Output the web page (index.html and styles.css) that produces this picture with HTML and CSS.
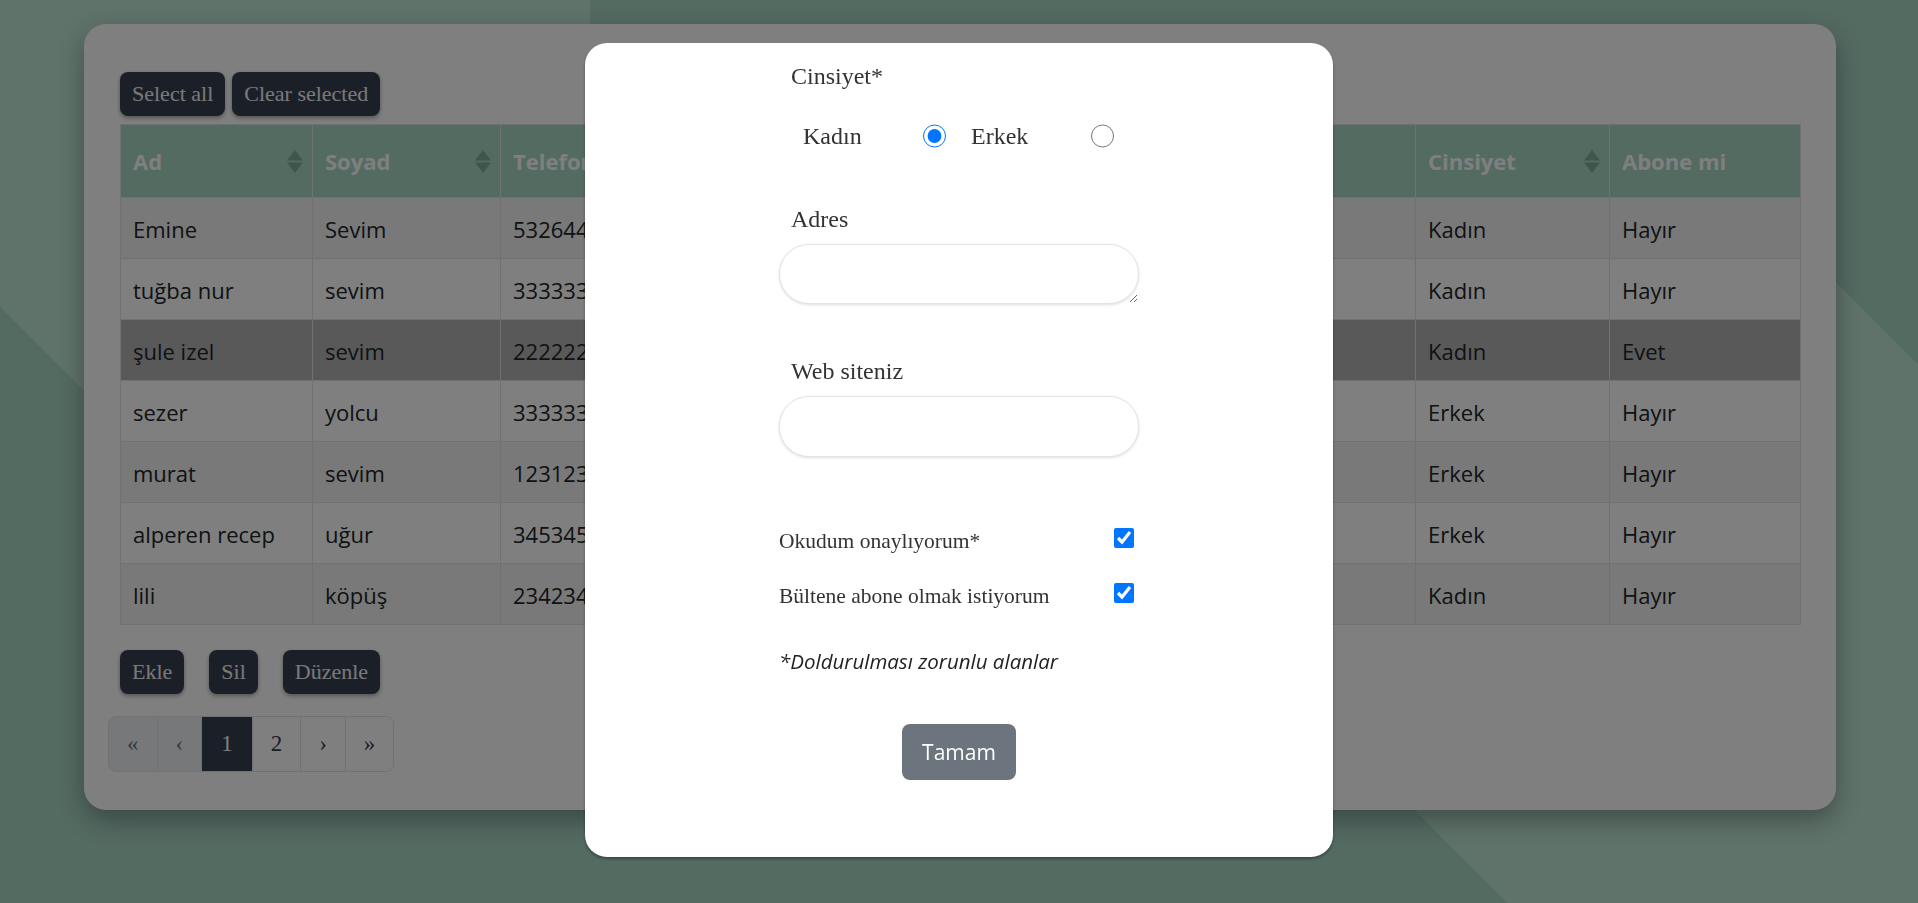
FILE: index.html
```html
<!DOCTYPE html>
<html lang="tr">
<head>
<meta charset="utf-8">
<title>Kişiler</title>
<link rel="stylesheet" href="styles.css">
</head>
<body>
<div class="page">
  <main class="card">
    <div class="toolbar">
      <button class="btn">Select all</button>
      <button class="btn">Clear selected</button>
    </div>
    <table class="grid">
      <colgroup>
        <col class="c-ad"><col class="c-soyad"><col class="c-tel"><col class="c-mail"><col class="c-adres"><col class="c-web"><col class="c-cins"><col class="c-abone">
      </colgroup>
      <thead>
        <tr>
          <th><div class="th-in"><span>Ad</span><svg class="sort" viewBox="0 0 16 23"><polygon points="0,10.5 8,0 16,10.5"/><polygon points="0,12.5 16,12.5 8,23"/></svg></div></th>
          <th><div class="th-in"><span>Soyad</span><svg class="sort" viewBox="0 0 16 23"><polygon points="0,10.5 8,0 16,10.5"/><polygon points="0,12.5 16,12.5 8,23"/></svg></div></th>
          <th><div class="th-in"><span>Telefon</span><svg class="sort" viewBox="0 0 16 23"><polygon points="0,10.5 8,0 16,10.5"/><polygon points="0,12.5 16,12.5 8,23"/></svg></div></th>
          <th><div class="th-in"><span>E-posta</span></div></th>
          <th><div class="th-in"><span>Adres</span></div></th>
          <th><div class="th-in"><span></span></div></th>
          <th><div class="th-in"><span>Cinsiyet</span><svg class="sort" viewBox="0 0 16 23"><polygon points="0,10.5 8,0 16,10.5"/><polygon points="0,12.5 16,12.5 8,23"/></svg></div></th>
          <th><div class="th-in"><span>Abone mi</span></div></th>
        </tr>
      </thead>
      <tbody>
        <tr><td>Emine</td><td>Sevim</td><td>5326441122</td><td>emine@mail.com</td><td>İstanbul</td><td></td><td>Kadın</td><td>Hayır</td></tr>
        <tr><td>tuğba nur</td><td>sevim</td><td>3333333333</td><td>tugba@mail.com</td><td>Ankara</td><td></td><td>Kadın</td><td>Hayır</td></tr>
        <tr class="selected"><td>şule izel</td><td>sevim</td><td>2222222222</td><td>sule@mail.com</td><td>İzmir</td><td></td><td>Kadın</td><td>Evet</td></tr>
        <tr><td>sezer</td><td>yolcu</td><td>3333333333</td><td>sezer@mail.com</td><td>Bursa</td><td></td><td>Erkek</td><td>Hayır</td></tr>
        <tr><td>murat</td><td>sevim</td><td>1231231231</td><td>murat@mail.com</td><td>Antalya</td><td></td><td>Erkek</td><td>Hayır</td></tr>
        <tr><td>alperen recep</td><td>uğur</td><td>3453453453</td><td>alperen@mail.com</td><td>Konya</td><td></td><td>Erkek</td><td>Hayır</td></tr>
        <tr><td>lili</td><td>köpüş</td><td>2342342342</td><td>lili@mail.com</td><td>Adana</td><td></td><td>Kadın</td><td>Hayır</td></tr>
      </tbody>
    </table>
    <div class="actions">
      <button class="btn">Ekle</button>
      <button class="btn">Sil</button>
      <button class="btn">Düzenle</button>
    </div>
    <nav class="pager">
      <span class="pg disabled">«</span>
      <span class="pg disabled">‹</span>
      <span class="pg active">1</span>
      <span class="pg">2</span>
      <span class="pg">›</span>
      <span class="pg">»</span>
    </nav>
  </main>
</div>

<div class="backdrop">
  <div class="modal">
    <form class="form">
      <div class="label">Cinsiyet*</div>
      <div class="radios">
        <label class="radio-label" for="r1">Kadın</label>
        <input type="radio" id="r1" name="cins" checked>
        <label class="radio-label" for="r2">Erkek</label>
        <input type="radio" id="r2" name="cins">
      </div>
      <div class="label label-adres">Adres</div>
      <textarea class="field area"></textarea>
      <div class="label label-web">Web siteniz</div>
      <input class="field line" type="text">
      <div class="check-row first">
        <span class="check-text">Okudum onaylıyorum*</span>
        <input type="checkbox" checked>
      </div>
      <div class="check-row">
        <span class="check-text">Bültene abone olmak istiyorum</span>
        <input type="checkbox" checked>
      </div>
      <p class="note">*Doldurulması zorunlu alanlar</p>
      <div class="submit-row">
        <button type="button" class="ok">Tamam</button>
      </div>
    </form>
  </div>
</div>
</body>
</html>
```

FILE: styles.css
```css
* { box-sizing: border-box; }

html, body {
  margin: 0;
  height: 100%;
}

body {
  font-family: "Open Sans", "Noto Sans", sans-serif;
  overflow: hidden;
}

.page {
  height: 100vh;
  padding-top: 24px;
  background:
    linear-gradient(45deg, transparent 137px, #bee6d4 137px) 0 0 / 590px 500px no-repeat,
    linear-gradient(45deg, transparent 1066px, #bee6d4 1066px, #bee6d4 1737px, transparent 1737px) 0 100% / 100% 853px no-repeat,
    #a8d6c4;
}

.card {
  width: 1752px;
  margin-left: 84px;
  background: #fff;
  border-radius: 22px;
  padding: 48px 36px 38px;
  box-shadow: 0 10px 26px rgba(0, 0, 0, 0.32);
}

.btn {
  height: 44px;
  padding: 0 12px;
  border: none;
  border-radius: 8px;
  background: #374151;
  color: #f2f2f2;
  font-family: "Liberation Serif", "Times New Roman", serif;
  font-size: 22px;
  line-height: 44px;
  box-shadow: 0 2px 4px rgba(0, 0, 0, 0.35);
  cursor: pointer;
}

.toolbar {
  display: flex;
  gap: 7px;
  margin-bottom: 8px;
}

.grid {
  width: 100%;
  table-layout: fixed;
  border-collapse: collapse;
  font-size: 22px;
  color: #212529;
}

.c-ad { width: 192px; }
.c-soyad { width: 188px; }
.c-tel { width: 220px; }
.c-mail { width: 240px; }
.c-adres { width: 220px; }
.c-web { width: 235px; }
.c-cins { width: 194px; }
.c-abone { width: 191px; }

.grid th,
.grid td {
  border: 1px solid #dee2e6;
  text-align: left;
  white-space: nowrap;
  overflow: hidden;
}

.grid thead tr { height: 73px; }
.grid tbody tr { height: 61px; }

.grid th {
  background: #a8d6c4;
  color: #fff;
  font-weight: 700;
  padding: 0 9px 0 12px;
}

.th-in {
  display: flex;
  align-items: center;
  justify-content: space-between;
}

.sort {
  width: 16px;
  height: 23px;
  fill: #7cac98;
  flex: none;
}

.grid td {
  padding: 2px 12px 0;
  background: #fff;
}

.grid tbody tr:nth-child(odd) td {
  background: #f2f2f2;
}

.grid tbody tr.selected td {
  background: #b3b3b3;
}

.actions {
  display: flex;
  gap: 25px;
  margin-top: 25px;
}

.pager {
  display: inline-flex;
  margin: 22px 0 0 -12px;
  border: 1px solid #dee2e6;
  border-radius: 8px;
  overflow: hidden;
  height: 56px;
  font-family: "Liberation Serif", "Times New Roman", serif;
  font-size: 23px;
}

.pg {
  display: flex;
  align-items: center;
  padding: 0 18px;
  background: #fff;
  color: #374151;
}

.pg + .pg { border-left: 1px solid #dee2e6; }

.pg.disabled {
  background: #eef0f3;
  color: #6c757d;
}

.pg.active {
  background: #374151;
  color: #fff;
  padding: 0 19px;
}

/* modal */
.backdrop {
  position: fixed;
  inset: 0;
  background: rgba(0, 0, 0, 0.5);
  display: flex;
  align-items: flex-start;
  justify-content: center;
  padding-top: 43px;
}

.modal {
  width: 748px;
  height: 814px;
  background: #fff;
  border-radius: 22px;
  padding-top: 18px;
  display: flex;
  justify-content: center;
  box-shadow: 0 2px 3px rgba(0, 0, 0, 0.35);
}

.form {
  width: 360px;
  color: #333;
  font-family: "Liberation Serif", "Times New Roman", serif;
}

.label {
  font-size: 24px;
  line-height: 30px;
  padding-left: 12px;
}

.radios {
  display: flex;
  align-items: center;
  height: 40px;
  margin-top: 25px;
  padding-left: 24px;
  font-size: 24px;
}

.radio-label { width: 120px; }

.radios input {
  width: 24px;
  height: 24px;
  margin: 0 24.6px 0 0;
}

.label-adres { margin-top: 47.6px; }
.label-web { margin-top: 52.5px; }

.field {
  display: block;
  width: 360px;
  height: 60px;
  border: 1px solid #e4e4e4;
  border-radius: 30px;
  box-shadow: 0 1px 3px rgba(0, 0, 0, 0.13);
  background: #fff;
  font: inherit;
  padding: 0 20px;
}

.area { margin-top: 10px; }
.line { margin-top: 10px; height: 61px; }

.check-row {
  display: flex;
  align-items: baseline;
  justify-content: space-between;
  font-size: 21.5px;
  line-height: 26px;
  margin-top: 29px;
}

.check-row.first { margin-top: 71px; }

.check-row input {
  width: 20px;
  height: 20px;
  margin: 0 5px 0 0;
}

.note {
  margin: 38px 0 0;
  font-family: "Open Sans", "Noto Sans", sans-serif;
  font-style: italic;
  font-size: 20.5px;
  line-height: 28px;
  color: #222;
}

.submit-row {
  display: flex;
  justify-content: center;
  margin-top: 49px;
}

.ok {
  width: 114px;
  height: 56px;
  border: none;
  border-radius: 8px;
  background: #6c757d;
  color: #fff;
  font-family: "Open Sans", "Noto Sans", sans-serif;
  font-size: 21px;
}
```
